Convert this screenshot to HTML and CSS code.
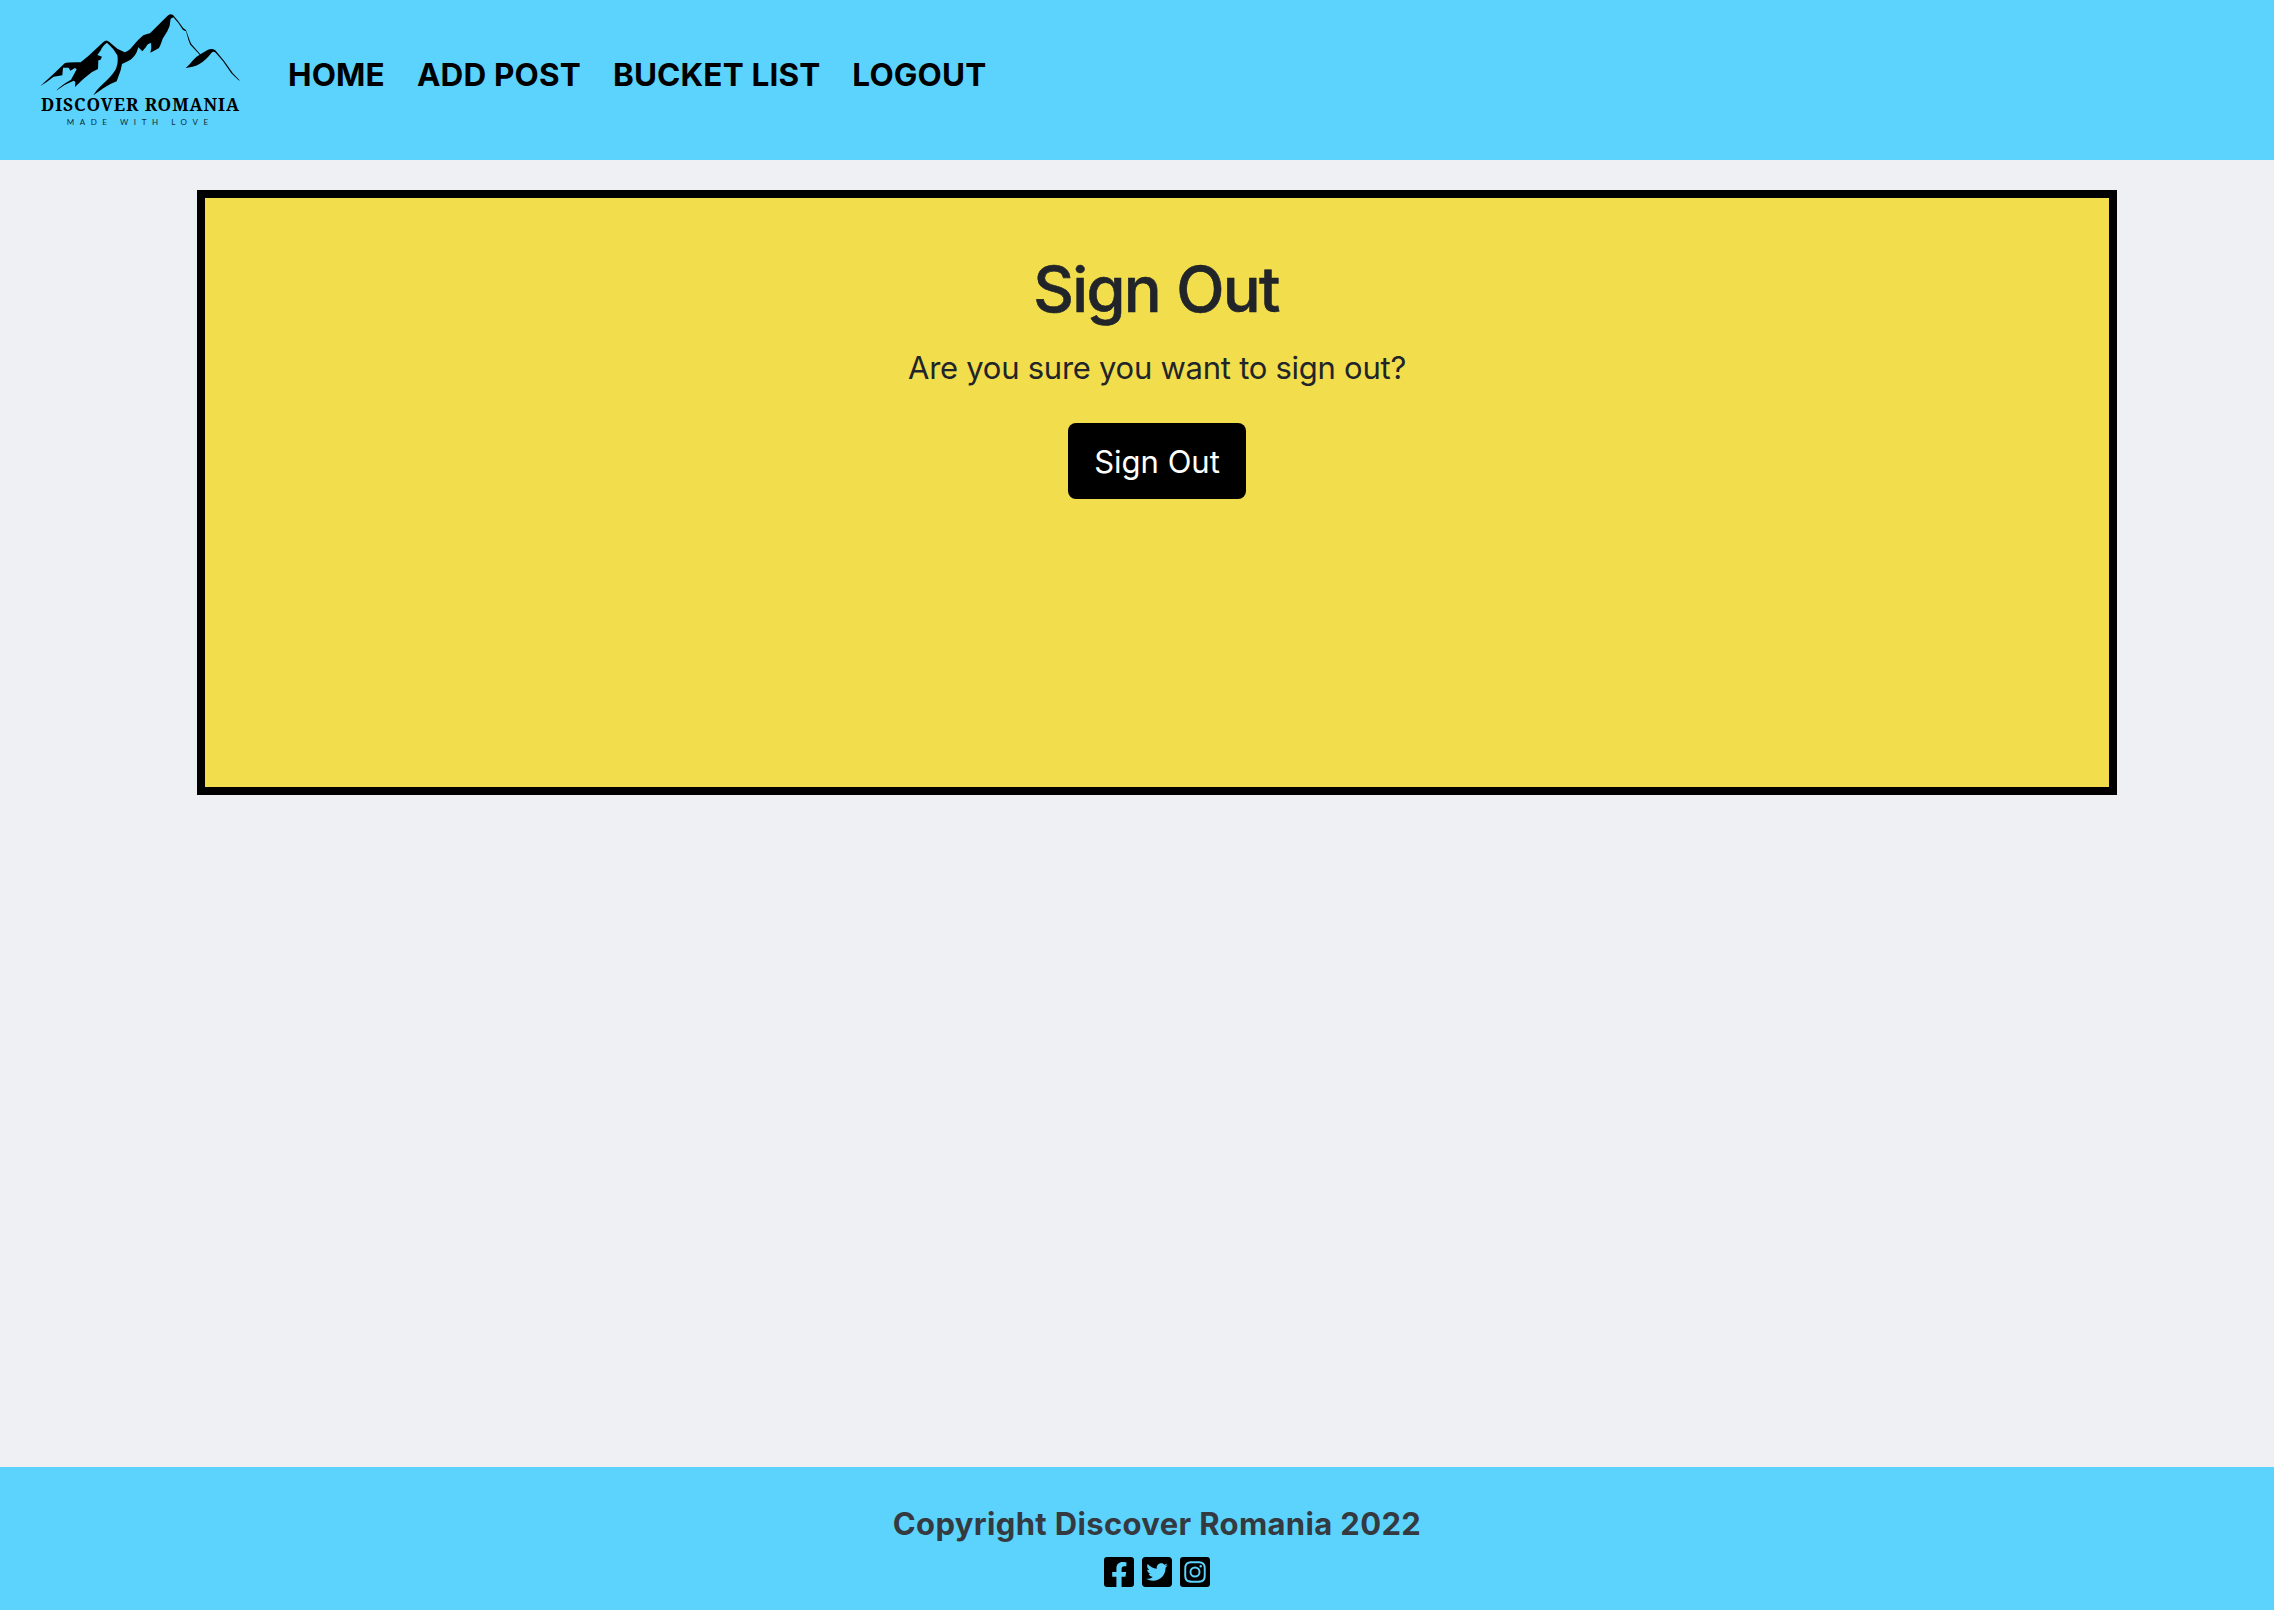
FILE: index.html
```
<!DOCTYPE html>
<html lang="en">
<head>
<meta charset="utf-8">
<title>Discover Romania</title>
<link rel="stylesheet" href="styles.css">
</head>
<body>
<header class="navbar">
  <a class="brand" href="#" aria-label="Discover Romania">
    <svg class="logo" viewBox="0 0 660 480">
      <path d="M31 258L68 224L104 190Q115 186 152 187L175 168L220 126Q229 117 238 126L262 146L284 157Q296 154 308 139Q327 116 340 106Q352 102 360 100L412 48Q420 40 429 45L446 65L460 85L468 90L472 101L479 121L484 132L511 163L534 149Q547 144 556 151L582 182L608 219L630 242L625 240L604 220L579 184L557 158Q550 152 544 159Q528 181 507 193Q494 201 467 204Q478 195 489 181Q497 170 509 164L481 134L476 122L468 94L459 90L445 69L430 52L422 56Q421 78 412 94L398 116Q391 138 386 145L361 158Q366 144 363 129Q352 131 348 141L337 154L325 142L320 157Q311 175 295 183L276 192L272 211L260 244Q238 252 220 265L190 286Q197 273 207 263L232 239Q251 220 258 206Q266 185 262 166Q251 145 231 128Q216 139 213 150L202 165L216 170L211 180L205 181L204 207L185 217L160 237L135 261L136 246L131 242L105 254L78 272Q93 256 123 239L140 208L135 204L121 212L116 203L99 203L97 226L71 230L50 246L31 258Z"/>
      <text class="logo-name" x="33" y="332" textLength="594">DISCOVER ROMANIA</text>
      <text class="logo-tag" x="110" y="374" textLength="424">MADE WITH LOVE</text>
    </svg>
  </a>
  <nav class="links">
    <a href="#">HOME</a>
    <a href="#">ADD POST</a>
    <a href="#">BUCKET LIST</a>
    <a href="#">LOGOUT</a>
  </nav>
</header>
<main class="content">
  <section class="card">
    <h1 class="title">Sign Out</h1>
    <p class="question">Are you sure you want to sign out?</p>
    <button class="button" type="button">Sign Out</button>
  </section>
</main>
<footer class="footer">
  <p class="copyright">Copyright Discover Romania 2022</p>
  <div class="social">
    <svg viewBox="0 32 448 448"><path d="M400 32H48A48 48 0 0 0 0 80v352a48 48 0 0 0 48 48h137.250V327.690h-63V256h63v-54.640c0-62.150 37-96.480 93.670-96.480 27.140 0 55.520 4.840 55.520 4.840v61h-31.270c-30.810 0-40.420 19.120-40.420 38.730V256h68.780l-11 71.690h-57.780V480H400a48 48 0 0 0 48-48V80a48 48 0 0 0-48-48z"/></svg>
    <svg viewBox="0 32 448 448"><path d="M400 32H48C21.500 32 0 53.500 0 80v352c0 26.500 21.500 48 48 48h352c26.500 0 48-21.500 48-48V80c0-26.500-21.500-48-48-48zm-48.900 158.800c.2 2.800.2 5.700.2 8.500 0 86.700-66 186.600-186.600 186.600-37.200 0-71.700-10.800-100.700-29.400 5.300.6 10.400.8 15.800.8 30.700 0 58.900-10.400 81.400-28-28.800-.6-53-19.500-61.300-45.500 10.100 1.500 19.200 1.500 29.600-1.200-30-6.100-52.500-32.500-52.500-64.400v-.8c8.700 4.900 18.900 7.900 29.600 8.300a65.447 65.447 0 0 1-29.200-54.600c0-12.200 3.200-23.400 8.900-33.100 32.300 39.800 80.800 65.800 135.200 68.600-9.300-44.500 24-80.600 64-80.600 18.900 0 35.900 7.900 47.900 20.700 14.800-2.800 29-8.300 41.600-15.800-4.900 15.200-15.200 28-28.800 36.100 13.200-1.400 26-5.100 37.800-10.200-8.900 13.100-20.100 24.700-32.900 34z"/></svg>
    <svg viewBox="0 32 448 448"><path d="M224 202.660A53.340 53.340 0 1 0 277.360 256 53.380 53.380 0 0 0 224 202.660zm124.710-41a54 54 0 0 0-30.410-30.410c-21-8.290-71-6.430-94.300-6.430s-73.250-1.930-94.310 6.430a54 54 0 0 0-30.410 30.410c-8.280 21-6.430 71.050-6.430 94.330s-1.850 73.270 6.470 94.340a54 54 0 0 0 30.410 30.410c21 8.290 71 6.430 94.310 6.430s73.240 1.930 94.300-6.430a54 54 0 0 0 30.410-30.410c8.350-21 6.430-71.050 6.430-94.330s1.920-73.260-6.430-94.330zM224 338a82 82 0 1 1 82-82 81.900 81.900 0 0 1-82 82zm85.380-148.300a19.140 19.140 0 1 1 19.130-19.140 19.100 19.100 0 0 1-19.090 19.180zM400 32H48A48 48 0 0 0 0 80v352a48 48 0 0 0 48 48h352a48 48 0 0 0 48-48V80a48 48 0 0 0-48-48zm-17.120 290c-1.290 25.630-7.140 48.340-25.850 67s-41.400 24.630-67 25.850c-26.410 1.490-105.590 1.490-132 0-25.630-1.290-48.260-7.150-67-25.850s-24.630-41.420-25.850-67c-1.490-26.420-1.490-105.610 0-132 1.290-25.630 7.070-48.340 25.850-67s41.470-24.560 67-25.780c26.410-1.490 105.590-1.490 132 0 25.630 1.290 48.330 7.150 67 25.850s24.630 41.420 25.850 67.050c1.490 26.320 1.490 105.440 0 131.880z"/></svg>
  </div>
</footer>
</body>
</html>
```
FILE: styles.css
```
* {
  box-sizing: border-box;
}

body {
  margin: 0;
  min-height: 1610px;
  display: flex;
  flex-direction: column;
  background: #eef0f4;
  color: #212529;
  font-family: Inter, "Liberation Sans", sans-serif;
  font-size: 31px;
  line-height: 48px;
}

.navbar {
  height: 160px;
  display: flex;
  align-items: flex-start;
  padding-left: 30px;
  background: #5cd3fd;
}

.brand {
  display: flex;
  width: 220px;
}

.logo {
  width: 220px;
  height: 160px;
  fill: #000;
}

.logo-name {
  font-family: "Noto Serif", "DejaVu Serif Condensed", "DejaVu Serif", serif;
  font-stretch: condensed;
  font-weight: 700;
  font-size: 52px;
}

.logo-tag {
  font-family: Lato, sans-serif;
  font-size: 24px;
  fill: #0c2b36;
}

.links {
  display: flex;
  gap: 32px;
  padding: 51px 0 0 38px;
}

.links a {
  color: #000;
  font-weight: 700;
  font-size: 31.500px;
  letter-spacing: 0.150px;
  text-decoration: none;
  white-space: nowrap;
}

.content {
  flex: 1;
  padding: 30px 157px 0 197px;
}

.card {
  height: 605px;
  display: flex;
  flex-direction: column;
  align-items: center;
  padding-top: 53px;
  border: 8px solid #000;
  background: #f2dd4c;
}

.title {
  margin: 0;
  padding-right: 2px;
  font-size: 63px;
  font-weight: 500;
  line-height: 77px;
  letter-spacing: -1.700px;
  word-spacing: 1px;
  -webkit-text-stroke: 0.600px #212529;
}

.question {
  margin: 16px 0 31px;
  letter-spacing: -0.260px;
}

.button {
  width: 178px;
  height: 76px;
  padding: 2px 0 0;
  border: 0;
  border-radius: 8px;
  background: #000;
  color: #fff;
  font: inherit;
}

.footer {
  height: 143px;
  padding: 33px 0 0 40px;
  background: #5cd3fd;
  text-align: center;
}

.copyright {
  margin: 0;
  color: #343a40;
  font-weight: 700;
  letter-spacing: 0.350px;
}

.social {
  display: flex;
  justify-content: center;
  gap: 8px;
  margin-top: 9px;
}

.social svg {
  width: 30px;
  height: 30px;
}
```
